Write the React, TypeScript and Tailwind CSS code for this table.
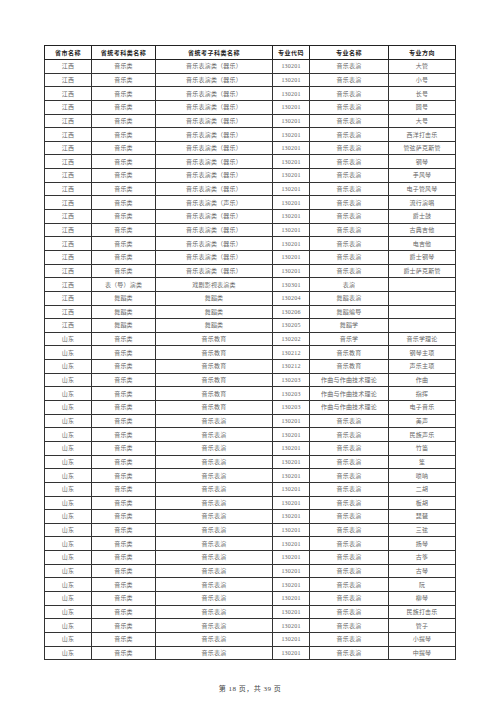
import React from "react";

type Row = [string, string, string, string, string, string];

const HEAD = ["省市名称", "省统考科类名称", "省统考子科类名称", "专业代码", "专业名称", "专业方向"];

const JX_QY = "音乐表演类（器乐）";

const ROWS: Row[] = [
  ["江西", "音乐类", JX_QY, "130201", "音乐表演", "大管"],
  ["江西", "音乐类", JX_QY, "130201", "音乐表演", "小号"],
  ["江西", "音乐类", JX_QY, "130201", "音乐表演", "长号"],
  ["江西", "音乐类", JX_QY, "130201", "音乐表演", "圆号"],
  ["江西", "音乐类", JX_QY, "130201", "音乐表演", "大号"],
  ["江西", "音乐类", JX_QY, "130201", "音乐表演", "西洋打击乐"],
  ["江西", "音乐类", JX_QY, "130201", "音乐表演", "管弦萨克斯管"],
  ["江西", "音乐类", JX_QY, "130201", "音乐表演", "钢琴"],
  ["江西", "音乐类", JX_QY, "130201", "音乐表演", "手风琴"],
  ["江西", "音乐类", JX_QY, "130201", "音乐表演", "电子管风琴"],
  ["江西", "音乐类", "音乐表演类（声乐）", "130201", "音乐表演", "流行演唱"],
  ["江西", "音乐类", JX_QY, "130201", "音乐表演", "爵士鼓"],
  ["江西", "音乐类", JX_QY, "130201", "音乐表演", "古典吉他"],
  ["江西", "音乐类", JX_QY, "130201", "音乐表演", "电吉他"],
  ["江西", "音乐类", JX_QY, "130201", "音乐表演", "爵士钢琴"],
  ["江西", "音乐类", JX_QY, "130201", "音乐表演", "爵士萨克斯管"],
  ["江西", "表（导）演类", "戏剧影视表演类", "130301", "表演", ""],
  ["江西", "舞蹈类", "舞蹈类", "130204", "舞蹈表演", ""],
  ["江西", "舞蹈类", "舞蹈类", "130206", "舞蹈编导", ""],
  ["江西", "舞蹈类", "舞蹈类", "130205", "舞蹈学", ""],
  ["山东", "音乐类", "音乐教育", "130202", "音乐学", "音乐学理论"],
  ["山东", "音乐类", "音乐教育", "130212", "音乐教育", "钢琴主项"],
  ["山东", "音乐类", "音乐教育", "130212", "音乐教育", "声乐主项"],
  ["山东", "音乐类", "音乐教育", "130203", "作曲与作曲技术理论", "作曲"],
  ["山东", "音乐类", "音乐教育", "130203", "作曲与作曲技术理论", "指挥"],
  ["山东", "音乐类", "音乐教育", "130203", "作曲与作曲技术理论", "电子音乐"],
  ...["美声", "民族声乐", "竹笛", "笙", "唢呐", "二胡", "板胡", "琵琶", "三弦", "扬琴", "古筝", "古琴", "阮", "柳琴", "民族打击乐", "管子", "小提琴", "中提琴"].map(
    (d): Row => ["山东", "音乐类", "音乐表演", "130201", "音乐表演", d],
  ),
];

const COLS = ["w-[47px]", "w-[64px]", "w-[117px]", "w-[37px]", "w-[79px]", "w-[67px]"];

export default function App() {
  return (
    <div
      className="w-[500px] h-[707px] bg-white flex flex-col items-center"
      style={{ fontFamily: '"Liberation Serif", "Noto Sans CJK SC", serif' }}
    >
      <table className="mt-[45px] table-fixed border-collapse border border-[#222] text-[6px] leading-none text-[#666]">
        <colgroup>
          {COLS.map((c, i) => (
            <col key={i} className={c} />
          ))}
        </colgroup>
        <thead>
          <tr className="h-[14px]">
            {HEAD.map((h) => (
              <th key={h} className="border border-[#222] p-0 font-bold text-[#222] tracking-[0.5px] text-center">
                {h}
              </th>
            ))}
          </tr>
        </thead>
        <tbody>
          {ROWS.map((r, i) => (
            <tr key={i} className="h-[13.65px]">
              {r.map((c, j) => (
                <td key={j} className="border border-[#333] p-0 text-center tracking-[0.2px] whitespace-nowrap">
                  {c}
                </td>
              ))}
            </tr>
          ))}
        </tbody>
      </table>
      <p className="mt-[24px] text-[7px] text-[#444] tracking-[0.5px]">第 18 页，共 39 页</p>
    </div>
  );
}
